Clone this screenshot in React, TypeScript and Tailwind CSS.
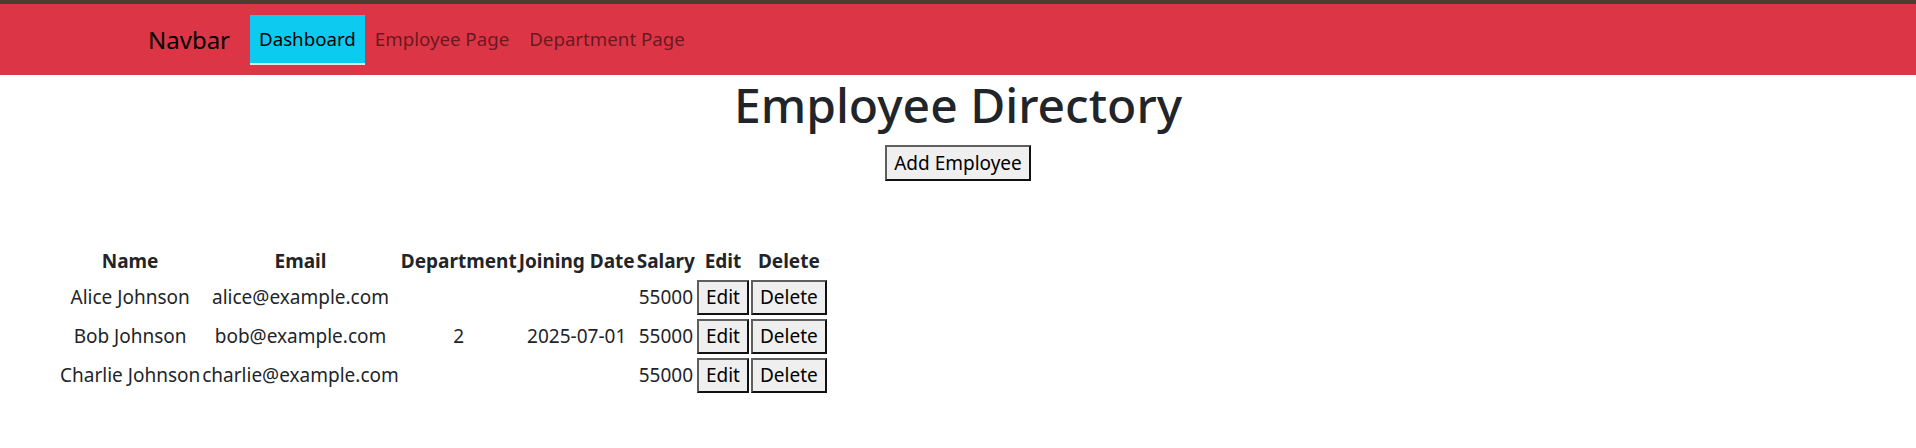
const employees = [
  { name: "Alice Johnson", email: "alice@example.com", dept: "", joined: "", salary: 55000 },
  { name: "Bob Johnson", email: "bob@example.com", dept: "2", joined: "2025-07-01", salary: 55000 },
  { name: "Charlie Johnson", email: "charlie@example.com", dept: "", joined: "", salary: 55000 },
];

const btn =
  "h-[35px] px-[7px] text-[19px] leading-none bg-[#efefef] text-black border-2 border-t-[#5e5e5e] border-l-[#5e5e5e] border-b-[#111] border-r-[#111]";

const headers = ["Name", "Email", "Department", "Joining Date", "Salary", "Edit", "Delete"];

function Navbar() {
  return (
    <div>
      <div className="h-[4px] bg-[#4d3d2f]" />
      <nav className="h-[71px] bg-[#dc3545] flex items-center pl-[148px]">
        <a className="text-[24px] text-black mr-[20px] leading-none">Navbar</a>
        <ul className="flex items-center text-[18.7px]">
          <li>
            <a className="block h-[50px] px-[9px] leading-[48px] bg-[#0dcaf0] text-black border-b-2 border-[#e4e4e4]">
              Dashboard
            </a>
          </li>
          <li>
            <a className="block h-[50px] px-[10px] leading-[48px] text-black/55">Employee Page</a>
          </li>
          <li>
            <a className="block h-[50px] px-[10px] leading-[48px] text-black/55">Department Page</a>
          </li>
        </ul>
      </nav>
    </div>
  );
}

export default function App() {
  return (
    <div className="min-h-screen bg-white text-[#212529] font-['Noto_Sans',sans-serif]">
      <Navbar />
      <h1 className="text-center text-[48px] font-medium leading-[60px] mb-[10px]">Employee Directory</h1>
      <div className="flex justify-center">
        <button className={btn + " h-[36px]"}>Add Employee</button>
      </div>

      <table className="mt-[62px] ml-[58px] border-separate border-spacing-[2.5px] text-[19px]">
        <thead>
          <tr>
            {headers.map((h) => (
              <th key={h} className="px-0 py-[1px] leading-[30px] font-bold">
                {h}
              </th>
            ))}
          </tr>
        </thead>
        <tbody>
          {employees.map((e) => (
            <tr key={e.email}>
              <td className="px-0 py-[1px] text-center align-middle">{e.name}</td>
              <td className="px-0 py-[1px] text-center align-middle">{e.email}</td>
              <td className="px-0 py-[1px] text-center align-middle">{e.dept}</td>
              <td className="px-0 py-[1px] text-center align-middle">{e.joined}</td>
              <td className="px-0 py-[1px] text-center align-middle">{e.salary}</td>
              <td className="px-0 py-[1px] text-center align-middle">
                <button className={btn}>Edit</button>
              </td>
              <td className="px-0 py-[1px] text-center align-middle">
                <button className={btn}>Delete</button>
              </td>
            </tr>
          ))}
        </tbody>
      </table>
    </div>
  );
}
